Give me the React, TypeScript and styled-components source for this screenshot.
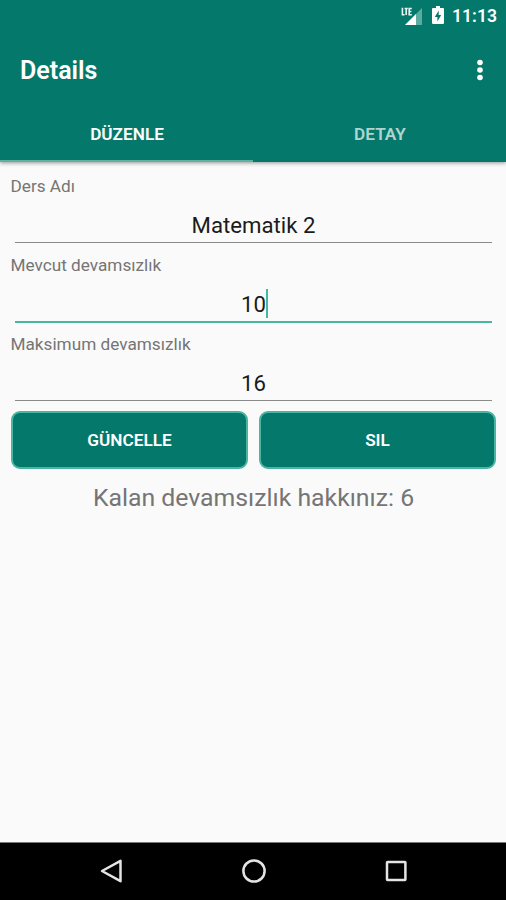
import React from "react";
import styled, { createGlobalStyle } from "styled-components";

const teal = "#04796b";
const accent = "#45b8a0";

const GlobalStyle = createGlobalStyle`
  * { box-sizing: border-box; }
  body { margin: 0; background: #fafafa; font-family: Roboto, "Noto Sans", sans-serif; }
`;

const Screen = styled.div`
  width: 506px;
  height: 900px;
  display: flex;
  flex-direction: column;
  background: #fafafa;
  overflow: hidden;
`;

const Header = styled.header`
  height: 162px;
  flex: none;
  display: flex;
  flex-direction: column;
  background: ${teal};
  color: #fff;
  box-shadow: 0 1px 4px rgba(0, 0, 0, 0.42);
`;

const StatusBar = styled.div`
  height: 30px;
  display: flex;
  align-items: center;
  justify-content: flex-end;
  padding: 2px 9px 0 0;
`;

const Clock = styled.time`
  font-size: 17.6px;
  line-height: 20px;
  font-weight: 600;
  margin-left: 8px;
`;

const SignalIcon = styled.svg`
  width: 23px;
  height: 20px;
  margin: -1px 8px 0 0;
`;

const BatteryIcon = styled.svg`
  width: 12px;
  height: 20px;
  margin-top: -2px;
`;

const Toolbar = styled.div`
  height: 76px;
  display: flex;
  align-items: center;
  justify-content: space-between;
  padding: 4px 22px 0 20px;
`;

const Title = styled.h1`
  margin: 2px 0 0;
  font-size: 25px;
  line-height: 32px;
  font-weight: 600;
`;

const OverflowButton = styled.button`
  width: 8px;
  height: 24px;
  padding: 0;
  border: 0;
  background: none;
  color: #fff;
`;

const Tabs = styled.nav`
  flex: 1;
  display: flex;
`;

const Tab = styled.a<{ $active?: boolean }>`
  flex: 1;
  display: flex;
  align-items: center;
  justify-content: center;
  font-size: 17.2px;
  line-height: 20px;
  font-weight: 600;
  color: ${(p) => (p.$active ? "#fff" : "rgba(255,255,255,0.7)")};
  border-bottom: 2px solid ${(p) => (p.$active ? "#5fb0a1" : "transparent")};
  padding: 2px 0 0 1px;
`;

const Form = styled.main`
  flex: 1;
  display: flex;
  flex-direction: column;
  padding: 13px 10px 0 11px;
`;

const Field = styled.label`
  height: 79.2px;
  display: flex;
  flex-direction: column;
`;

const Label = styled.span`
  font-size: 17.2px;
  line-height: 22px;
  margin-left: -0.5px;
  color: #757575;
`;

const Value = styled.span<{ $focused?: boolean }>`
  height: ${(p) => (p.$focused ? "47px" : "46px")};
  margin: 0 4px;
  display: flex;
  align-items: center;
  justify-content: center;
  padding-top: 10px;
  font-size: 22.2px;
  line-height: 30px;
  color: #1b1b1b;
  border-bottom: ${(p) => (p.$focused ? `2px solid ${accent}` : "1px solid #8b8b8b")};
`;

const Caret = styled.i`
  width: 2px;
  height: 29px;
  margin-right: -2px;
  background: ${accent};
`;

const Actions = styled.div`
  display: flex;
  gap: 11px;
  margin-top: -2px;
`;

const ActionButton = styled.button`
  flex: 1;
  height: 58px;
  border: 2px solid #4cb5a2;
  border-radius: 9px;
  background: ${teal};
  color: #fff;
  font: 600 17.2px/20px Roboto, sans-serif;
`;

const Summary = styled.p`
  margin: 13px 0 0;
  text-align: center;
  font-size: 24.8px;
  line-height: 32px;
  color: #757575;
`;

const NavBar = styled.footer`
  height: 58px;
  flex: none;
  display: flex;
  justify-content: center;
  gap: 118px;
  padding: 16px 0 0 1px;
  background: #000;
  border-top: 1px solid #777;
`;

const NavIcon = styled.svg`
  width: 24px;
  height: 24px;
  fill: none;
  stroke: #e4e4e4;
  stroke-width: 2.5;
  stroke-linejoin: round;
`;

export default function App() {
  return (
    <Screen>
      <GlobalStyle />
      <Header>
        <StatusBar>
          <SignalIcon viewBox="0 0 23 20">
            <path d="M21 2v17H4z" fill="#5cab9f" />
            <path d="M15 8v11H4z" fill="#fff" />
            <path
              d="M1.4 1.8v6.9h2.2M3.6 2.5h3.2M5.2 2.5v6.6M10.8 2.5H8.2v6.2h2.6M8.2 5.5h2.2"
              fill="none"
              stroke="#e8f5f2"
              strokeWidth="1.6"
            />
          </SignalIcon>
          <BatteryIcon viewBox="0 0 12 20">
            <path d="M4 1h4v2h3q1 0 1 1v14q0 1-1 1H1q-1 0-1-1V4q0-1 1-1h3z" fill="#fff" />
            <path d="M6.7 5.5L2.8 12h2.6v4.5L9.2 10H6.7z" fill={teal} />
          </BatteryIcon>
          <Clock>11:13</Clock>
        </StatusBar>
        <Toolbar>
          <Title>Details</Title>
          <OverflowButton aria-label="Menu">
            <svg width="8" height="24" viewBox="0 0 8 24" fill="currentColor">
              <circle cx="4" cy="4.5" r="2.8" />
              <circle cx="4" cy="12" r="2.8" />
              <circle cx="4" cy="19.5" r="2.8" />
            </svg>
          </OverflowButton>
        </Toolbar>
        <Tabs>
          <Tab $active>DÜZENLE</Tab>
          <Tab>DETAY</Tab>
        </Tabs>
      </Header>
      <Form>
        <Field>
          <Label>Ders Adı</Label>
          <Value>Matematik 2</Value>
        </Field>
        <Field>
          <Label>Mevcut devamsızlık</Label>
          <Value $focused>
            10
            <Caret />
          </Value>
        </Field>
        <Field>
          <Label>Maksimum devamsızlık</Label>
          <Value>16</Value>
        </Field>
        <Actions>
          <ActionButton>GÜNCELLE</ActionButton>
          <ActionButton>SIL</ActionButton>
        </Actions>
        <Summary>Kalan devamsızlık hakkınız: 6</Summary>
      </Form>
      <NavBar>
        <NavIcon viewBox="0 0 24 24">
          <path d="M20.5 1.8v20.4L2 12z" />
        </NavIcon>
        <NavIcon viewBox="0 0 24 24">
          <circle cx="12" cy="12" r="10.6" />
        </NavIcon>
        <NavIcon viewBox="0 0 24 24">
          <rect x="3" y="3" width="18.4" height="18" rx="0.5" />
        </NavIcon>
      </NavBar>
    </Screen>
  );
}
